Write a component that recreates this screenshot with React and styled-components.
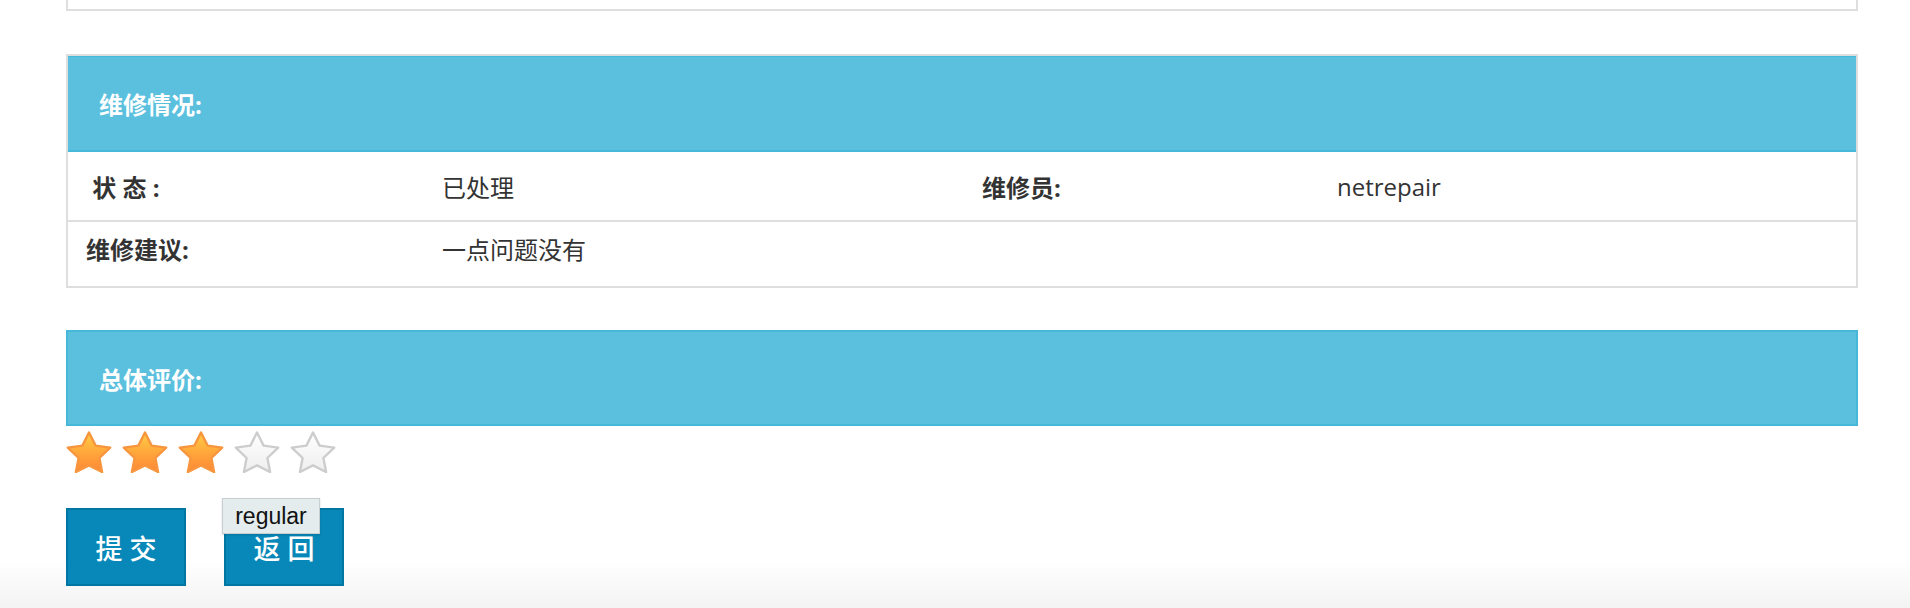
import React from 'react';
import styled, { createGlobalStyle } from 'styled-components';

const GlobalStyle = createGlobalStyle`
  html {
    height: 100%;
    background: linear-gradient(to bottom, #fff 0, #fff 560px, #f3f3f3 608px) no-repeat;
    background-size: 100% 608px;
    background-color: #f3f3f3;
  }
  body {
    margin: 0;
    padding: 0;
    font-family: 'Open Sans', 'Noto Sans CJK SC', sans-serif;
    color: #333;
  }
`;

const Page = styled.div`
  width: 1792px;
  margin-left: 66px;
`;

const PanelTail = styled.div`
  height: 9px;
  border: 2px solid #dedede;
  border-top: none;
`;

const Panel = styled.div`
  margin-top: ${(p) => p.gap}px;
  border: ${(p) => (p.bare ? 'none' : '2px solid #dedede')};
`;

const Heading = styled.div`
  display: flex;
  align-items: center;
  box-sizing: border-box;
  height: 96px;
  padding-left: 31px;
  background: #5bc0de;
  border: ${(p) => (p.bare ? '2px solid #46b8da' : 'none')};
  border-top: ${(p) => (p.bare ? '2px' : '1px')} solid #46b8da;
  border-bottom: 2px solid #46b8da;
  color: #fff;
  font-size: 24px;
  font-weight: bold;
`;

const Row = styled.div`
  display: grid;
  grid-template-columns: 356px 540px 355px 1fr;
  align-items: center;
  box-sizing: border-box;
  height: ${(p) => p.h}px;
  padding-bottom: ${(p) => p.lift || 0}px;
  border-bottom: ${(p) => (p.last ? 'none' : '2px solid #dedede')};
`;

const Label = styled.div`
  padding-left: 18px;
  font-size: 24px;
  font-weight: bold;
  color: #333;
  white-space: pre;
`;

const Value = styled.div`
  padding-left: 18px;
  font-size: 24px;
  color: #333;
`;

const Rating = styled.div`
  position: relative;
`;

const Stars = styled.div`
  display: flex;
  gap: 10px;
  margin-top: 5px;
  height: 42px;
`;

const Actions = styled.div`
  display: flex;
  gap: 38px;
  margin-top: 35px;
`;

const Btn = styled.button`
  width: 120px;
  height: 78px;
  padding: 0;
  border: 2px solid #0077a3;
  background: #0888b8;
  color: #fff;
  font-family: 'Open Sans', 'Noto Sans CJK SC', sans-serif;
  font-size: 27px;
  font-weight: 500;
  cursor: pointer;
  &:hover {
    background: #067aa5;
  }
`;

const Tip = styled.div`
  position: absolute;
  left: 156px;
  top: 67px;
  box-sizing: border-box;
  width: 98px;
  height: 36px;
  display: flex;
  align-items: center;
  justify-content: center;
  background: #e4ecee;
  border: 1px solid #c9cfd1;
  box-shadow: 0 1px 2px rgba(0, 0, 0, 0.15);
  font-family: 'Liberation Sans', Arial, sans-serif;
  font-size: 23px;
  color: #111;
`;

// five-point star, slightly chubby like the rating plugin sprites
const starPoints =
  '23,1.5 29.6,14.6 44.2,16.6 33.4,27 36.1,41 23,34.4 9.9,41 12.6,27 1.8,16.6 16.4,14.6';

const Star = ({ on }) => (
  <svg width="46" height="42" viewBox="0 0 46 42">
    <defs>
      <linearGradient id="starOn" x1="0" y1="0" x2="0" y2="1">
        <stop offset="0" stopColor="#ffcf45" />
        <stop offset="0.45" stopColor="#ffab3c" />
        <stop offset="1" stopColor="#ff8636" />
      </linearGradient>
      <linearGradient id="starOff" x1="0" y1="0" x2="0" y2="1">
        <stop offset="0" stopColor="#ffffff" />
        <stop offset="1" stopColor="#eeeeee" />
      </linearGradient>
    </defs>
    <polygon
      points={starPoints}
      fill={on ? 'url(#starOn)' : 'url(#starOff)'}
      stroke={on ? '#f7963f' : '#cdcdcd'}
      strokeWidth="2.4"
      strokeLinejoin="round"
    />
  </svg>
);

const App = () => {
  const score = 3;
  return (
    <>
      <GlobalStyle />
      <Page>
        <PanelTail />
        <Panel gap={43}>
          <Heading>维修情况:</Heading>
          <Row h={70}>
            <Label>{'\u00a0状\u00a0态\u00a0:'}</Label>
            <Value>已处理</Value>
            <Label>维修员:</Label>
            <Value>netrepair</Value>
          </Row>
          <Row h={64} lift={12} last>
            <Label>维修建议:</Label>
            <Value>一点问题没有</Value>
          </Row>
        </Panel>
        <Panel gap={42} bare>
          <Heading bare>总体评价:</Heading>
        </Panel>
        <Rating>
          <Stars>
            {[1, 2, 3, 4, 5].map((n) => (
              <Star key={n} on={n <= score} />
            ))}
          </Stars>
          <Actions>
            <Btn>提 交</Btn>
            <Btn>返 回</Btn>
          </Actions>
          <Tip>regular</Tip>
        </Rating>
      </Page>
    </>
  );
};

export default App;
